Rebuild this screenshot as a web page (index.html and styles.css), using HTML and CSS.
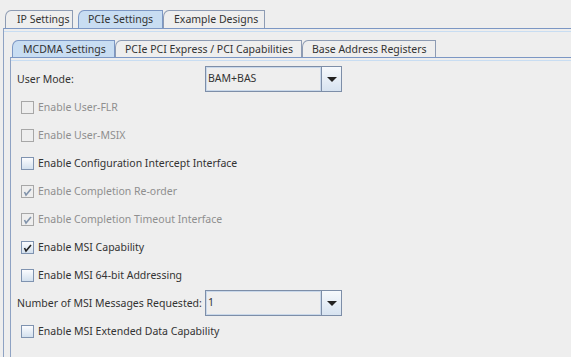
FILE: index.html
```html
<!DOCTYPE html>
<html lang="en">
<head>
  <meta charset="UTF-8">
  <title>PCIe Settings</title>
  <link rel="stylesheet" href="styles.css">
</head>
<body>
  <div class="tabs top-tabs">
    <div class="tab tab-ip">IP Settings</div>
    <div class="tab tab-pcie selected">PCIe Settings</div>
    <div class="tab tab-ex">Example Designs</div>
  </div>
  <div class="panel outer">
    <div class="panel-body outer-body">
      <div class="tabs inner-tabs">
        <div class="tab tab-mcdma selected">MCDMA Settings</div>
        <div class="tab tab-cap">PCIe PCI Express / PCI Capabilities</div>
        <div class="tab tab-bar">Base Address Registers</div>
      </div>
      <div class="panel inner">
        <div class="panel-body inner-body">
          <div class="form">
            <div class="label">User Mode:</div>
            <div class="combo">
              <div class="combo-text">BAM+BAS</div>
              <div class="combo-btn"><span class="arrow"></span></div>
            </div>

            <div class="check disabled"><span class="box"></span>Enable User-FLR</div>
            <div class="check disabled"><span class="box"></span>Enable User-MSIX</div>
            <div class="check"><span class="box"></span>Enable Configuration Intercept Interface</div>
            <div class="check disabled"><span class="box"><svg viewBox="0 0 11 11" width="11" height="11"><path d="M2.5 6 L4 9 L9 3" fill="none" stroke="#8193ab" stroke-width="1.6"/></svg></span>Enable Completion Re-order</div>
            <div class="check disabled"><span class="box"><svg viewBox="0 0 11 11" width="11" height="11"><path d="M2.5 6 L4 9 L9 3" fill="none" stroke="#8193ab" stroke-width="1.6"/></svg></span>Enable Completion Timeout Interface</div>
            <div class="check"><span class="box"><svg viewBox="0 0 11 11" width="11" height="11"><path d="M2.5 6 L4 9 L9 3" fill="none" stroke="#222" stroke-width="1.6"/></svg></span>Enable MSI Capability</div>
            <div class="check"><span class="box"></span>Enable MSI 64-bit Addressing</div>

            <div class="label">Number of MSI Messages Requested:</div>
            <div class="combo">
              <div class="combo-text">1</div>
              <div class="combo-btn"><span class="arrow"></span></div>
            </div>

            <div class="check"><span class="box"></span>Enable MSI Extended Data Capability</div>
          </div>
        </div>
      </div>
    </div>
  </div>
</body>
</html>
```

FILE: styles.css
```css
html, body {
  margin: 0;
  height: 100%;
  background: #eeeeee;
  font-family: "Noto Sans", "DejaVu Sans", sans-serif;
  font-size: 10.5px;
  color: #333333;
  overflow: hidden;
}

.tabs {
  display: flex;
  align-items: flex-end;
}

.top-tabs {
  margin-top: 10px;
  padding-left: 5px;
  height: 18px;
}

.tab {
  box-sizing: border-box;
  height: 18px;
  line-height: 17px;
  border: 1px solid #8d9bb3;
  border-bottom: none;
  border-top-left-radius: 6px 7px;
  background: #eeeeee;
  white-space: nowrap;
}

.tab.selected {
  background: #c8ddf2;
  border-color: #7c97c4;
}

.tab-ip { width: 68px; padding-left: 11px; }
.tab-pcie { width: 85px; padding-left: 9px; margin-left: 5px; }
.tab-ex { width: 102px; padding-left: 10px; }

.inner-tabs {
  height: 17px;
  padding-left: 2px;
}

.inner-tabs .tab {
  height: 17px;
  line-height: 16px;
}

.tab-mcdma { width: 103px; padding-left: 10px; }
.tab-cap { width: 187px; padding-left: 9px; }
.tab-bar { width: 134px; padding-left: 9px; }

.panel {
  border-top: 1px solid #7c97c4;
  border-left: 1px solid #8ea2c3;
  padding-top: 2px;
}

.panel-body {
  border-top: 1px solid #c8ddf2;
}

.outer {
  margin-left: 3px;
  height: 329px;
  box-sizing: border-box;
}

.outer-body {
  padding: 8px 0 0 6px;
}

.inner {
  height: 300px;
  box-sizing: border-box;
}

.inner-body {
  padding-top: 4px;
}

.form {
  display: grid;
  grid-template-columns: 188px 137px;
  grid-auto-rows: 28px;
  padding-left: 6px;
}

.label {
  align-self: center;
  white-space: nowrap;
}

.combo {
  align-self: center;
  height: 26px;
  display: flex;
}

.combo-text {
  flex: 1;
  box-sizing: border-box;
  border: 1px solid #7d8ea8;
  box-shadow: inset 0 0 0 1px #c9d8ea;
  background: #eeeeee;
  padding-left: 2px;
  line-height: 22px;
}

.combo-btn {
  width: 20px;
  box-sizing: border-box;
  border: 1px solid #7d8ea8;
  border-left: none;
  background: linear-gradient(#f6f9fc, #d7e3f0);
  display: flex;
  align-items: center;
  justify-content: center;
}

.arrow {
  width: 0;
  height: 0;
  border-left: 5px solid transparent;
  border-right: 5px solid transparent;
  border-top: 5px solid #222222;
  margin-top: 1px;
}

.check {
  grid-column: 1 / 3;
  display: flex;
  align-items: center;
  padding-left: 4px;
  white-space: nowrap;
}

.box {
  box-sizing: border-box;
  width: 13px;
  height: 13px;
  margin-right: 4px;
  border: 1px solid #7f93b0;
  background: linear-gradient(#fbfcfe, #d3e0ee);
  display: flex;
  align-items: center;
  justify-content: center;
}

.check.disabled {
  color: #8f8f8f;
}

.check.disabled .box {
  border-color: #a7a7a7;
  background: #eeeeee;
}
```
